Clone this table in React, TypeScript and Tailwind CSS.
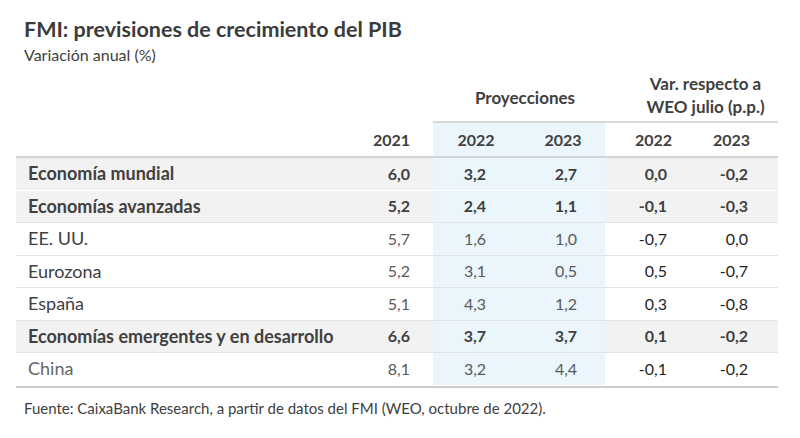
const rows = [
  { label: "Economía mundial", v: ["6,0", "3,2", "2,7", "0,0", "-0,2"], bold: true, line: "border-white" },
  { label: "Economías avanzadas", v: ["5,2", "2,4", "1,1", "-0,1", "-0,3"], bold: true, line: "border-[#e3e3e3]" },
  { label: "EE. UU.", v: ["5,7", "1,6", "1,0", "-0,7", "0,0"], line: "border-[#e3e3e3]" },
  { label: "Eurozona", v: ["5,2", "3,1", "0,5", "0,5", "-0,7"], line: "border-[#e3e3e3]" },
  { label: "España", v: ["5,1", "4,3", "1,2", "0,3", "-0,8"], line: "border-[#e3e3e3]" },
  { label: "Economías emergentes y en desarrollo", v: ["6,6", "3,7", "3,7", "0,1", "-0,2"], bold: true, line: "border-[#e3e3e3]" },
  { label: "China", v: ["8,1", "3,2", "4,4", "-0,1", "-0,2"], light: true, line: "border-transparent" },
];

const cols = "grid grid-cols-[334px_83px_86px_86px_85px_88px]";

export default function App() {
  return (
    <div className="w-[800px] h-[438px] bg-white text-[#404040] font-['Lato',sans-serif] overflow-hidden">
      <div className="pl-[24px] pt-[16px]">
        <h1 className="text-[21.5px] leading-[26px] font-bold text-[#3b3b3b]">FMI: previsiones de crecimiento del PIB</h1>
        <p className="text-[16px] leading-[20px] mt-[3px] text-[#404040]">Variación anual (%)</p>
      </div>

      <div className="ml-[16px] w-[762px] mt-[3px]">
        {/* grouped header */}
        <div className={`${cols} h-[53px] text-[17px] leading-[23px] font-bold text-[#404040]`}>
          <div className="col-span-2" />
          <div className="col-span-2 flex items-center justify-center pl-3 pt-[6px]">Proyecciones</div>
          <div className="col-span-2 flex flex-col items-center justify-center pl-[28px] pt-[1px]">
            <span>Var. respecto a</span>
            <span>WEO julio (p.p.)</span>
          </div>
        </div>
        <div className={cols}>
          <div className="col-span-2" />
          <div className="col-span-4 h-[2px] bg-[#d9d9d9]" />
        </div>

        {/* years */}
        <div className={`${cols} h-[35px] text-[16px] font-bold border-b-2 border-[#d3d3d3]`}>
          <div />
          <div className="flex items-center justify-end pr-[23px]">2021</div>
          <div className="flex items-center justify-center bg-[#eaf6fc]">2022</div>
          <div className="flex items-center justify-center bg-[#eaf6fc] pl-[2px]">2023</div>
          <div className="flex items-center justify-end pr-[18px]">2022</div>
          <div className="flex items-center justify-end pr-[28px]">2023</div>
        </div>

        {/* data rows */}
        <div className="border-b-2 border-[#cccccc]">
          {rows.map((r) => {
            const bg = r.bold ? "bg-[#f2f2f2]" : "bg-white";
            const txt = r.bold ? "font-bold text-[#404040]" : "text-[#595959]";
            return (
              <div key={r.label} className={`${cols} h-[32.5px] text-[16px] border-b ${r.line}`}>
                <div className={`${bg} flex items-center pl-[12px] text-[18px] ${r.bold ? "font-bold text-[#404040]" : r.light ? "text-[#666666]" : "text-[#404040]"}`}>{r.label}</div>
                <div className={`${bg} ${txt} flex items-center justify-end pr-[23px]`}>{r.v[0]}</div>
                <div className={`bg-[#eaf6fc] ${txt} flex items-center justify-center pr-[2px]`}>{r.v[1]}</div>
                <div className={`bg-[#eaf6fc] ${txt} flex items-center justify-center pl-[8px]`}>{r.v[2]}</div>
                <div className={`${bg} ${r.bold ? "font-bold text-[#404040]" : "text-[#1f1f1f]"} flex items-center justify-end pr-[23px]`}>{r.v[3]}</div>
                <div className={`${bg} ${r.bold ? "font-bold text-[#404040]" : "text-[#1f1f1f]"} flex items-center justify-end pr-[30px]`}>{r.v[4]}</div>
              </div>
            );
          })}
        </div>
      </div>

      <p className="pl-[24px] mt-[10px] text-[15px] leading-[20px] text-[#404040]">
        Fuente: CaixaBank Research, a partir de datos del FMI (WEO, octubre de 2022).
      </p>
    </div>
  );
}
